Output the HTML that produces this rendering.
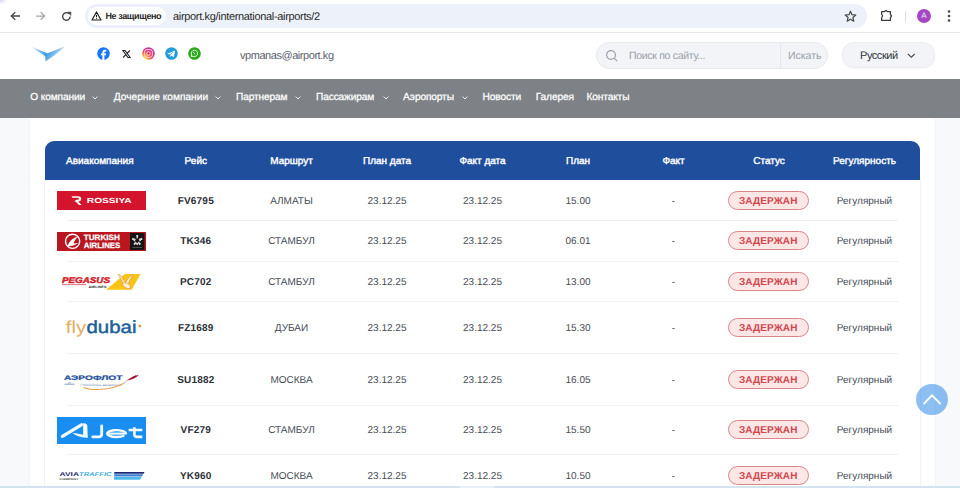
<!DOCTYPE html>
<html><head><meta charset="utf-8">
<style>
*{box-sizing:border-box;margin:0;padding:0}
html,body{width:960px;height:488px;overflow:hidden;background:#f7f9fb;font-family:"Liberation Sans",sans-serif;position:relative;text-rendering:geometricPrecision}
.abs{position:absolute}
#chrome{position:absolute;left:0;top:0;width:960px;height:33px;background:#fff;border-bottom:1px solid #e3e6ea}
#addr{position:absolute;left:85px;top:4px;width:782px;height:24px;border-radius:12px;background:#edf2fa}
#chip{position:absolute;left:88px;top:7px;width:78px;height:18px;border-radius:9px;background:#fff}
.ct{position:absolute;white-space:nowrap}
#hdr{position:absolute;left:0;top:33px;width:960px;height:46px;background:#fff}
#nav{position:absolute;left:0;top:79px;width:960px;height:39.3px;background:#7e8286}
.nv{position:absolute;top:79.3px;height:38px;line-height:38px;color:#fff;font-size:10.2px;letter-spacing:-0.15px;white-space:nowrap;-webkit-text-stroke:0.25px #fff}
.chev{position:absolute}
#cont{position:absolute;left:30px;top:118px;width:904.5px;height:371px;background:#fff;box-shadow:0 0 1.5px rgba(0,0,0,0.08)}
#thead{position:absolute;left:45px;top:141px;width:875px;height:39px;background:#1f4e9d;border-radius:9px 9px 0 0}
#tbl{position:absolute;left:44px;top:180px;width:877px;height:320px;border-left:1px solid #f0f2f5;border-right:1px solid #f0f2f5}
.th{position:absolute;top:141.8px;height:39px;line-height:39px;width:96px;text-align:center;color:#fff;font-size:10px;font-weight:normal;-webkit-text-stroke:0.4px #fff;white-space:nowrap}
.sep{position:absolute;left:67px;width:831px;height:1px;background:#eef0f3}
.td{position:absolute;width:96px;text-align:center;font-size:10px;color:#464b54;white-space:nowrap;letter-spacing:0px}
.b{font-weight:bold;color:#2b2f36;letter-spacing:0.2px}
.badge{position:absolute;left:727.5px;width:81.5px;height:19px;border:1px solid #d9868b;background:#fde6e6;border-radius:10px;color:#d2454b;font-weight:bold;font-size:10px;letter-spacing:0.1px;text-align:center;line-height:19.6px}
#bottom{position:absolute;left:0;top:485.8px;width:960px;height:2.2px;background:#d4e4ee}
</style></head><body>
<div id="chrome">
  <div class="abs" style="left:-3px;top:-3px;width:9px;height:7px;border-radius:50%;background:radial-gradient(ellipse at 30% 30%, #c9cff2 0%, rgba(220,225,248,0.6) 50%, rgba(255,255,255,0) 100%)"></div>
  <svg class="abs" style="left:10px;top:11px" width="11" height="10" viewBox="0 0 11 10"><path d="M10 5H1.6M5.3 1.2L1.3 5l4 3.8" stroke="#474747" stroke-width="1.35" fill="none"/></svg>
  <svg class="abs" style="left:35px;top:11px" width="11" height="10" viewBox="0 0 11 10"><path d="M1 5h8.4M5.7 1.2L9.7 5l-4 3.8" stroke="#a8a8a8" stroke-width="1.25" fill="none"/></svg>
  <svg class="abs" style="left:61px;top:11px" width="11" height="11" viewBox="0 0 11 11"><path d="M9.2 5.6A3.8 3.8 0 1 1 8.1 2.8" stroke="#474747" stroke-width="1.4" fill="none"/><path d="M6.6 1.1h3.3v3.3z" fill="#474747" stroke="#474747" stroke-width="0.6" stroke-linejoin="round"/></svg>
  <div id="addr"></div>
  <div id="chip"></div>
  <svg class="abs" style="left:91.2px;top:11px" width="11" height="10" viewBox="0 0 11 10"><path d="M5.5 1L10 9H1z" stroke="#1f1f1f" stroke-width="1.2" fill="none" stroke-linejoin="round"/><path d="M5.5 3.9v2.4M5.5 7.1v0.8" stroke="#1f1f1f" stroke-width="1"/></svg>
  <div class="ct" style="left:105.5px;top:8.9px;font-size:9px;font-weight:bold;letter-spacing:-0.4px;color:#262626;line-height:14px">Не защищено</div>
  <div class="ct" style="left:173px;top:9.9px;font-size:11px;letter-spacing:-0.33px;color:#2a2a2a;line-height:14px">airport.kg/international-airports/2</div>
  <svg class="abs" style="left:844px;top:10px" width="13" height="13" viewBox="0 0 13 13"><path d="M6.5 1.2l1.5 3.5 3.8.3-2.9 2.5.9 3.7-3.3-2-3.3 2 .9-3.7L1.2 5l3.8-.3z" stroke="#474747" stroke-width="1.2" fill="none" stroke-linejoin="round"/></svg>
  <svg class="abs" style="left:876px;top:6px" width="20" height="20" viewBox="876 6 20 20"><path d="M881.6 11.6H884.6Q886 9.6 887.4 11.6H890.4V14.6Q892.6 16 890.4 17.4V20.4H881.6V17.6Q883.4 16 881.6 14.4Z" stroke="#3c3c3c" stroke-width="1.25" fill="none" stroke-linejoin="round"/></svg>
  <div class="abs" style="left:904.5px;top:10.5px;width:1.2px;height:11px;background:#d5e1f0"></div>
  <div class="abs" style="left:917px;top:9px;width:14px;height:14px;border-radius:50%;background:#a348c2;color:#f6e8ff;font-size:8px;text-align:center;line-height:14px">A</div>
  <svg class="abs" style="left:946px;top:9px" width="6" height="14" viewBox="0 0 6 14"><circle cx="3" cy="2.5" r="1.3" fill="#474747"/><circle cx="3" cy="7" r="1.3" fill="#474747"/><circle cx="3" cy="11.5" r="1.3" fill="#474747"/></svg>
</div>
<div id="hdr">
  <svg class="abs" style="left:28px;top:10px" width="40" height="22" viewBox="28 43 40 22">
    <defs><linearGradient id="lg1" x1="0" y1="0" x2="1" y2="0.3"><stop offset="0" stop-color="#d4ebfa"/><stop offset="0.55" stop-color="#3d9ce2"/><stop offset="1" stop-color="#bfe2f8"/></linearGradient></defs>
    <path d="M31.5 46.7 L47.5 53.2 L64.7 46.5 L55.5 54.5 L45.6 61.4 L45.2 56.2 Z" fill="url(#lg1)"/>
  </svg>
  <svg class="abs" style="left:97px;top:14px" width="13" height="13" viewBox="0 0 13 13"><circle cx="6.5" cy="6.5" r="6.3" fill="#1877f2"/><path d="M7.4 13V8.2h1.5l.3-1.8H7.4V5.3c0-.5.2-.9.9-.9h1V2.8c-.3 0-.9-.1-1.5-.1-1.5 0-2.4.9-2.4 2.4v1.3H3.9v1.8h1.5V13z" fill="#fff"/></svg>
  <svg class="abs" style="left:122px;top:17px" width="9" height="8" viewBox="0 0 9 8"><path d="M0.8 0.5h2.2l5.2 7h-2.2z" fill="none" stroke="#222" stroke-width="1.1"/><path d="M7.8 0.5L4.9 3.6M1.1 7.5L4 4.4" stroke="#222" stroke-width="1.1"/></svg>
  <svg class="abs" style="left:142px;top:14px" width="13" height="13" viewBox="0 0 13 13"><defs><radialGradient id="ig" cx="0.15" cy="0.95" r="1.15"><stop offset="0" stop-color="#fde26a"/><stop offset="0.3" stop-color="#f9a03a"/><stop offset="0.55" stop-color="#ec3c6c"/><stop offset="1" stop-color="#a83bc6"/></radialGradient></defs><circle cx="6.5" cy="6.5" r="6.3" fill="url(#ig)"/><rect x="2.6" y="2.6" width="7.8" height="7.8" rx="2.4" fill="none" stroke="#ffd6e0" stroke-width="0.9"/><circle cx="6.5" cy="6.5" r="1.8" fill="none" stroke="#ffd6e0" stroke-width="0.9"/><circle cx="6.5" cy="6.5" r="0.7" fill="#d0204a"/></svg>
  <svg class="abs" style="left:165px;top:14px" width="13" height="13" viewBox="0 0 13 13"><circle cx="6.5" cy="6.5" r="6.3" fill="#229ed9"/><path d="M2.9 6.4l6.6-2.6c.3-.1.6.1.5.5l-1.1 5.3c-.1.4-.4.5-.7.3L6.5 8.6l-.9.9c-.1.1-.2.2-.4.2l.1-1.7 3.1-2.8c.1-.1 0-.2-.2-.1L4.4 7.5 2.8 7c-.4-.1-.4-.4.1-.6z" fill="#fff"/></svg>
  <svg class="abs" style="left:188px;top:14px" width="13" height="13" viewBox="0 0 13 13"><circle cx="6.5" cy="6.5" r="6.3" fill="#2aa81a"/><path d="M6.5 3.2a3.2 3.2 0 0 0-2.8 4.8l-.4 1.6 1.6-.4A3.2 3.2 0 1 0 6.5 3.2z" fill="none" stroke="#fff" stroke-width="0.9"/><path d="M5.4 5.2c.2.8.8 1.6 1.8 2" stroke="#fff" stroke-width="0.8" fill="none"/></svg>
  <div class="ct" style="left:240px;top:15.6px;font-size:11px;letter-spacing:-0.45px;line-height:14px;color:#5a606b">vpmanas@airport.kg</div>
  <div class="abs" style="left:596px;top:9px;width:232px;height:27px;border-radius:14px;background:#f2f4f7;border:1px solid #e6e9ed"></div>
  <div class="abs" style="left:780px;top:10px;width:1px;height:25px;background:#e3e6ea"></div>
  <svg class="abs" style="left:604.5px;top:15.5px" width="14" height="14" viewBox="0 0 14 14"><circle cx="6" cy="6" r="4.4" fill="none" stroke="#9aa1ab" stroke-width="1.2"/><path d="M9.2 9.2l3 3" stroke="#9aa1ab" stroke-width="1.2"/></svg>
  <div class="ct" style="left:629px;top:15.8px;font-size:10.5px;letter-spacing:-0.3px;line-height:14px;color:#9aa0a8">Поиск по сайту...</div>
  <div class="ct" style="left:788px;top:15.8px;font-size:10.5px;line-height:14px;color:#9aa0a8">Искать</div>
  <div class="abs" style="left:842px;top:9px;width:92.5px;height:26.3px;border-radius:12px;background:#f2f4f7;border:1px solid #eceef1;box-shadow:0 1px 2px rgba(0,0,0,0.04)"></div>
  <div class="ct" style="left:860px;top:16px;font-size:11px;letter-spacing:-0.45px;line-height:14px;color:#2f343b">Русский</div>
  <svg class="abs" style="left:906.5px;top:19.5px" width="9" height="6" viewBox="0 0 9 6"><path d="M1 1l3.3 3.3L7.6 1" stroke="#3a3f46" stroke-width="1.1" fill="none"/></svg>
</div>
<div id="nav"></div>
<div class="nv" style="left:30.3px">О компании</div>
<div class="nv" style="left:113.75px"><span style="letter-spacing:0px">Дочерние компании</span></div>
<div class="nv" style="left:236px">Партнерам</div>
<div class="nv" style="left:316px">Пассажирам</div>
<div class="nv" style="left:403px">Аэропорты</div>
<div class="nv" style="left:482.6px">Новости</div>
<div class="nv" style="left:535.8px">Галерея</div>
<div class="nv" style="left:586.5px">Контакты</div>
<svg class="chev" style="left:92.3px;top:95.5px" width="6" height="4" viewBox="0 0 6 4"><path d="M0.6 0.6L3 3 5.4 0.6" stroke="#e8eaec" stroke-width="1" fill="none"/></svg>
<svg class="chev" style="left:215px;top:95.5px" width="6" height="4" viewBox="0 0 6 4"><path d="M0.6 0.6L3 3 5.4 0.6" stroke="#e8eaec" stroke-width="1" fill="none"/></svg>
<svg class="chev" style="left:294.5px;top:95.5px" width="6" height="4" viewBox="0 0 6 4"><path d="M0.6 0.6L3 3 5.4 0.6" stroke="#e8eaec" stroke-width="1" fill="none"/></svg>
<svg class="chev" style="left:383px;top:95.5px" width="6" height="4" viewBox="0 0 6 4"><path d="M0.6 0.6L3 3 5.4 0.6" stroke="#e8eaec" stroke-width="1" fill="none"/></svg>
<svg class="chev" style="left:461.5px;top:95.5px" width="6" height="4" viewBox="0 0 6 4"><path d="M0.6 0.6L3 3 5.4 0.6" stroke="#e8eaec" stroke-width="1" fill="none"/></svg>

<div id="cont"></div>
<div id="thead"></div>
<div class="th" style="left:51.8px;letter-spacing:0px">Авиакомпания</div>
<div class="th" style="left:147.8px;letter-spacing:0px">Рейс</div>
<div class="th" style="left:243.5px;letter-spacing:0px">Маршрут</div>
<div class="th" style="left:339px;letter-spacing:0px">План дата</div>
<div class="th" style="left:434.5px;letter-spacing:0px">Факт дата</div>
<div class="th" style="left:530px;letter-spacing:0px">План</div>
<div class="th" style="left:625.5px;letter-spacing:0px">Факт</div>
<div class="th" style="left:721px;letter-spacing:0px">Статус</div>
<div class="th" style="left:816.5px;letter-spacing:0px">Регулярность</div>

<div id="tbl"></div>
<div class="sep" style="top:219.5px"></div>
<div class="td b" style="left:147.8px;top:195.3px;line-height:14px">FV6795</div>
<div class="td" style="left:243.5px;top:195.3px;line-height:14px">АЛМАТЫ</div>
<div class="td" style="left:339px;top:195.3px;line-height:14px">23.12.25</div>
<div class="td" style="left:434.5px;top:195.3px;line-height:14px">23.12.25</div>
<div class="td" style="left:530px;top:195.3px;line-height:14px">15.00</div>
<div class="td" style="left:625.5px;top:195.3px;line-height:14px">-</div>
<div class="badge" style="top:191.3px">ЗАДЕРЖАН</div>
<div class="td" style="left:816.5px;top:195.3px;line-height:14px">Регулярный</div>
<div class="sep" style="top:260.5px"></div>
<div class="td b" style="left:147.8px;top:235.2px;line-height:14px">TK346</div>
<div class="td" style="left:243.5px;top:235.2px;line-height:14px">СТАМБУЛ</div>
<div class="td" style="left:339px;top:235.2px;line-height:14px">23.12.25</div>
<div class="td" style="left:434.5px;top:235.2px;line-height:14px">23.12.25</div>
<div class="td" style="left:530px;top:235.2px;line-height:14px">06.01</div>
<div class="td" style="left:625.5px;top:235.2px;line-height:14px">-</div>
<div class="badge" style="top:231.2px">ЗАДЕРЖАН</div>
<div class="td" style="left:816.5px;top:235.2px;line-height:14px">Регулярный</div>
<div class="sep" style="top:300.5px"></div>
<div class="td b" style="left:147.8px;top:276.1px;line-height:14px">PC702</div>
<div class="td" style="left:243.5px;top:276.1px;line-height:14px">СТАМБУЛ</div>
<div class="td" style="left:339px;top:276.1px;line-height:14px">23.12.25</div>
<div class="td" style="left:434.5px;top:276.1px;line-height:14px">23.12.25</div>
<div class="td" style="left:530px;top:276.1px;line-height:14px">13.00</div>
<div class="td" style="left:625.5px;top:276.1px;line-height:14px">-</div>
<div class="badge" style="top:272.1px">ЗАДЕРЖАН</div>
<div class="td" style="left:816.5px;top:276.1px;line-height:14px">Регулярный</div>
<div class="sep" style="top:353.0px"></div>
<div class="td b" style="left:147.8px;top:322.0px;line-height:14px">FZ1689</div>
<div class="td" style="left:243.5px;top:322.0px;line-height:14px">ДУБАИ</div>
<div class="td" style="left:339px;top:322.0px;line-height:14px">23.12.25</div>
<div class="td" style="left:434.5px;top:322.0px;line-height:14px">23.12.25</div>
<div class="td" style="left:530px;top:322.0px;line-height:14px">15.30</div>
<div class="td" style="left:625.5px;top:322.0px;line-height:14px">-</div>
<div class="badge" style="top:318.0px">ЗАДЕРЖАН</div>
<div class="td" style="left:816.5px;top:322.0px;line-height:14px">Регулярный</div>
<div class="sep" style="top:405.0px"></div>
<div class="td b" style="left:147.8px;top:374.3px;line-height:14px">SU1882</div>
<div class="td" style="left:243.5px;top:374.3px;line-height:14px">МОСКВА</div>
<div class="td" style="left:339px;top:374.3px;line-height:14px">23.12.25</div>
<div class="td" style="left:434.5px;top:374.3px;line-height:14px">23.12.25</div>
<div class="td" style="left:530px;top:374.3px;line-height:14px">16.05</div>
<div class="td" style="left:625.5px;top:374.3px;line-height:14px">-</div>
<div class="badge" style="top:370.3px">ЗАДЕРЖАН</div>
<div class="td" style="left:816.5px;top:374.3px;line-height:14px">Регулярный</div>
<div class="sep" style="top:454.0px"></div>
<div class="td b" style="left:147.8px;top:424.2px;line-height:14px">VF279</div>
<div class="td" style="left:243.5px;top:424.2px;line-height:14px">СТАМБУЛ</div>
<div class="td" style="left:339px;top:424.2px;line-height:14px">23.12.25</div>
<div class="td" style="left:434.5px;top:424.2px;line-height:14px">23.12.25</div>
<div class="td" style="left:530px;top:424.2px;line-height:14px">15.50</div>
<div class="td" style="left:625.5px;top:424.2px;line-height:14px">-</div>
<div class="badge" style="top:420.2px">ЗАДЕРЖАН</div>
<div class="td" style="left:816.5px;top:424.2px;line-height:14px">Регулярный</div>
<div class="td b" style="left:147.8px;top:469.9px;line-height:14px">YK960</div>
<div class="td" style="left:243.5px;top:469.9px;line-height:14px">МОСКВА</div>
<div class="td" style="left:339px;top:469.9px;line-height:14px">23.12.25</div>
<div class="td" style="left:434.5px;top:469.9px;line-height:14px">23.12.25</div>
<div class="td" style="left:530px;top:469.9px;line-height:14px">10.50</div>
<div class="td" style="left:625.5px;top:469.9px;line-height:14px">-</div>
<div class="badge" style="top:465.9px">ЗАДЕРЖАН</div>
<div class="td" style="left:816.5px;top:469.9px;line-height:14px">Регулярный</div>

<!-- Rossiya -->
<div class="abs" style="left:56.8px;top:191.2px;width:89.3px;height:18.6px;background:#d3142c"></div>
<svg class="abs" style="left:56.5px;top:191px" width="90" height="19" viewBox="0 0 90 19">
  <path d="M14.5 5.2h6.2c2.6 0 3.6 1.3 3.6 2.6 0 1.6-1.2 2.6-3 2.9l3.4 3.4h-2.6l-3.6-3.7h-1.2l1.8-1.6h1.2c1.1 0 1.6-.4 1.6-1 0-.6-.5-1-1.6-1h-5z" fill="#fff"/>
  <path d="M15.3 8.2l6.4 0" stroke="#fff" stroke-width="0" />
  <text x="29.8" y="12.2" font-family="Liberation Sans" font-weight="bold" font-size="7.4" fill="#fff" textLength="44.8" lengthAdjust="spacingAndGlyphs">ROSSIYA</text>
</svg>
<!-- Turkish -->
<div class="abs" style="left:56.8px;top:232.3px;width:89.3px;height:18.3px;background:#b91620"></div>
<svg class="abs" style="left:56.5px;top:232px" width="90" height="19" viewBox="0 0 90 19">
  <circle cx="15.6" cy="9.3" r="7.1" fill="none" stroke="#fff" stroke-width="1.4"/>
  <path d="M10.3 14.6C11.8 9.6 15.4 6 21.2 4.4 18.6 6.8 17.1 9.2 16.7 11.5L21.3 11.1C18.6 13.1 14.6 14.3 10.3 14.6z" fill="#fff"/>
  <text x="26.8" y="8.3" font-family="Liberation Sans" font-weight="bold" font-size="7.8" stroke="#fff" stroke-width="0.25" fill="#fff" textLength="36" lengthAdjust="spacingAndGlyphs">TURKISH</text>
  <text x="26.8" y="16.4" font-family="Liberation Sans" font-weight="bold" font-size="7.8" stroke="#fff" stroke-width="0.25" fill="#fff" textLength="36.5" lengthAdjust="spacingAndGlyphs">AIRLINES</text>
  <rect x="73" y="1" width="14.5" height="17" fill="#141414"/>
  <g fill="#d8d8d8" transform="translate(80.2 8.4) scale(1.15)"><path d="M-0.9-4.6L0.9-4.6 0.5-1.6-0.5-1.6z" transform="rotate(0)"/><path d="M-0.9-4.6L0.9-4.6 0.5-1.6-0.5-1.6z" transform="rotate(72)"/><path d="M-0.9-4.6L0.9-4.6 0.5-1.6-0.5-1.6z" transform="rotate(144)"/><path d="M-0.9-4.6L0.9-4.6 0.5-1.6-0.5-1.6z" transform="rotate(216)"/><path d="M-0.9-4.6L0.9-4.6 0.5-1.6-0.5-1.6z" transform="rotate(288)"/><path d="M-4.2-1.4L-1.4-1.4-2.4 1.2z M4.2-1.4L1.4-1.4 2.4 1.2z M0 4.4L-1.6 2.2 1.6 2.2z" /></g><rect x="75.5" y="15.2" width="9.5" height="0.7" fill="#666"/>
</svg>
<!-- Pegasus -->
<svg class="abs" style="left:56px;top:270px" width="90" height="24" viewBox="0 0 90 24">
  <text x="6" y="13" font-family="Liberation Sans" font-weight="bold" font-style="italic" font-size="8.4" fill="#d31f2a" stroke="#d31f2a" stroke-width="0.45" textLength="48" lengthAdjust="spacingAndGlyphs">PEGASUS</text>
  <rect x="6" y="14.3" width="24" height="0.8" fill="#d9535a"/>
  <text x="32.5" y="17.6" font-family="Liberation Sans" font-weight="bold" font-size="3.2" fill="#222" textLength="18" lengthAdjust="spacingAndGlyphs">AIRLINES</text>
  <path d="M69 4H84.6L75.6 19.7H50z" fill="#f9c416"/>
  <path d="M62 4.2L64.6 5.2 70 13.2 67.6 14.4z" fill="#fbe2b0" stroke="#d9822e" stroke-width="0.5"/>
  <path d="M77.2 4.2C73.6 6 70.6 9.5 69.4 13.6L72.2 13.8C73.6 10.2 75.4 7 77.2 4.2z" fill="#fff2d6" stroke="#d9822e" stroke-width="0.5"/>
  <ellipse cx="70.6" cy="15.6" rx="4.2" ry="2.3" transform="rotate(28 70.6 15.6)" fill="#fff2d6" stroke="#d9822e" stroke-width="0.5"/>
</svg>
<!-- flydubai -->
<svg class="abs" style="left:60px;top:312px" width="90" height="30" viewBox="0 0 90 30">
  <text x="5.8" y="21" font-family="Liberation Sans" font-size="17.5" fill="#e2b060" textLength="20.5" lengthAdjust="spacingAndGlyphs">fly</text>
  <text x="26.5" y="21" font-family="Liberation Sans" font-size="17.5" fill="#1d5f98" stroke="#1d5f98" stroke-width="0.45" textLength="50" lengthAdjust="spacingAndGlyphs">dubai</text>
  <circle cx="79.8" cy="14" r="1.4" fill="#e49a3c"/>
</svg>
<!-- Aeroflot -->
<svg class="abs" style="left:58px;top:366px" width="90" height="30" viewBox="0 0 90 30">
  <text x="6" y="14.1" font-family="Liberation Sans" font-weight="bold" font-size="6.5" fill="#1f4e9e" stroke="#1f4e9e" stroke-width="0.2" textLength="58.5" lengthAdjust="spacingAndGlyphs">АЭРОФЛОТ</text>
  <path d="M68.8 14.6C71.5 12.2 75.8 9.6 81 8.8 78.6 11.6 74.2 13.9 68.8 14.6z" fill="#b8142e"/><path d="M66 17.4L69.5 14" stroke="#6a6f80" stroke-width="0.5"/>
  <path d="M74 11.6l3.5-2.2 1.2-.1-2.6 2z" fill="#3a2040"/>
  <path d="M6.5 18.2h10" stroke="#5f86c4" stroke-width="0.8"/>
  <path d="M10 17.5l2-1.2 1 .7" stroke="#5f86c4" stroke-width="0.6" fill="none"/>
  <text x="22.5" y="19.8" font-family="Liberation Sans" font-style="italic" font-size="3.3" fill="#7b8fb5" textLength="41" lengthAdjust="spacingAndGlyphs">Российские авиалинии</text>
  <path d="M25.5 21.4c6 2.6 18 3 29 .4 4-1 8-2.4 11.5-4.5" stroke="#e8a34f" stroke-width="1.1" fill="none"/>
</svg>
<!-- AlJet -->
<div class="abs" style="left:56.8px;top:417.3px;width:89.3px;height:26.6px;background:#1a8ef0"></div>
<svg class="abs" style="left:56.5px;top:417px" width="90" height="27" viewBox="0 0 90 27">
  <path d="M5.4 19.3L24.4 7.8" stroke="#effaff" stroke-width="3.3" stroke-linecap="round"/>
  <path d="M26.1 6.0C27.5 6.1 29.3 6.9 30.3 7.9L30.7 20.4C29.3 20.3 27.6 19.9 26.1 19.2z" fill="#f4fbff"/>
  <path d="M15.3 15.9C20 16.2 25.4 17.2 30.5 18.4L30.7 20.7C24.5 20.6 19 18.7 15.3 15.9z" fill="#e8f8ff"/>
  <path d="M44.7 8.8V17.2c0 1.8-1.1 2.7-3 2.7H35.8" stroke="#f2fbff" stroke-width="2.8" fill="none" stroke-linecap="round"/>
  <path d="M51.5 16.6H69.6" stroke="#f2fbff" stroke-width="2.1" fill="none"/><path d="M69 16.6A9.4 3.4 0 1 0 67.3 18.5" stroke="#f2fbff" stroke-width="2.4" fill="none"/>
  <path d="M77.4 10.3V17.5c0 1.6 1 2.4 2.8 2.4H85.3M71.7 13H85.3" stroke="#f2fbff" stroke-width="2.6" fill="none"/>
</svg>
<!-- AviaTraffic -->
<svg class="abs" style="left:56px;top:468px" width="90" height="16" viewBox="0 0 90 16">
  <text x="3.5" y="8" font-family="Liberation Sans" font-weight="bold" font-size="5.6" fill="#2b2e6f" textLength="19.5" lengthAdjust="spacingAndGlyphs">AVIA</text>
  <text x="23" y="8" font-family="Liberation Sans" font-weight="bold" font-style="italic" font-size="5.6" fill="#39aee0" textLength="32.5" lengthAdjust="spacingAndGlyphs">TRAFFIC</text>
  <text x="3.5" y="11.6" font-family="Liberation Sans" font-weight="bold" font-size="2.4" fill="#444" textLength="19" lengthAdjust="spacingAndGlyphs">COMPANY</text>
  <path d="M58.5 4h30l-1 1.7h-29.5z" fill="#1d2a7a"/>
  <path d="M58.2 6.2h29l-1.3 2.2h-27.7z" fill="#3b7fd0"/>
  <path d="M58 9h27.6l-1.6 2.8h-26z" fill="#4cb8ea"/>
</svg>

<div class="abs" style="left:916.2px;top:383.5px;width:31.6px;height:31.6px;border-radius:50%;background:rgba(28,128,230,0.5)"></div>
<svg class="abs" style="left:916px;top:383.5px" width="32" height="32" viewBox="916 383.5 32 32"><path d="M923.6 403.5L932 394.8 940.6 403.5" stroke="#fff" stroke-width="1.8" fill="none"/></svg>
<div id="bottom"></div>
<div class="abs" style="left:460px;top:485.8px;width:34px;height:2.2px;background:#e6eff5"></div>

</body></html>
